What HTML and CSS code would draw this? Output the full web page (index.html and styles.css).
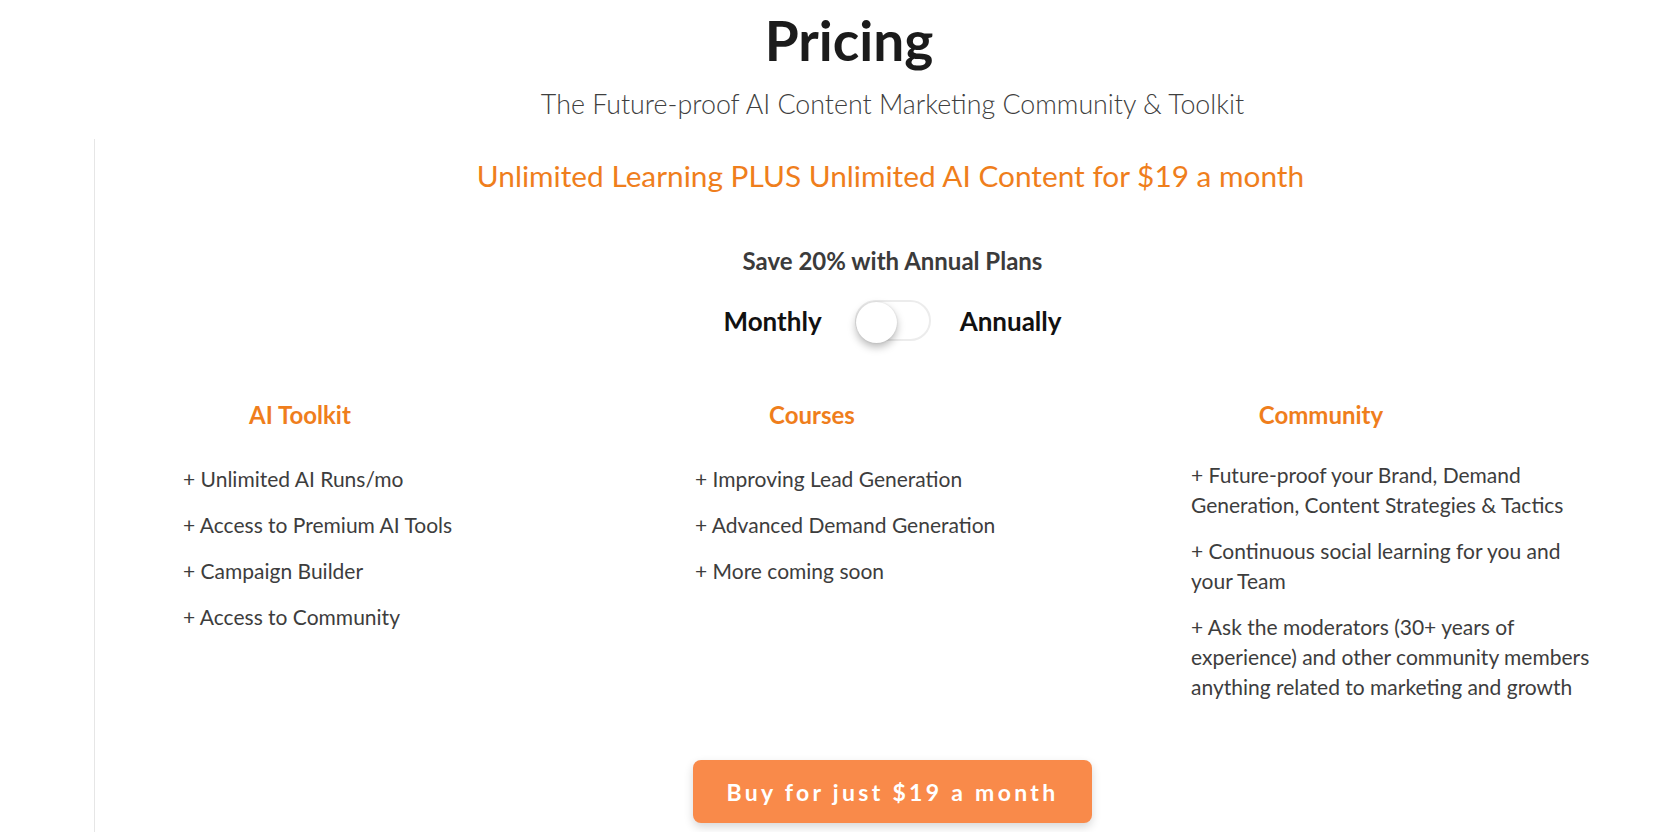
FILE: index.html
```html
<!DOCTYPE html>
<html lang="en">
<head>
<meta charset="utf-8">
<title>Pricing</title>
<link rel="stylesheet" href="styles.css">
</head>
<body>
<header class="page-head">
  <h1 class="page-title">Pricing</h1>
  <p class="page-subtitle">The Future-proof AI Content Marketing Community &amp; Toolkit</p>
</header>
<main class="pricing">
  <h2 class="offer">Unlimited Learning PLUS Unlimited AI Content for $19 a month</h2>
  <p class="save">Save 20% with Annual Plans</p>
  <div class="billing">
    <span class="billing-label billing-monthly">Monthly</span>
    <span class="switch"><span class="switch-knob"></span></span>
    <span class="billing-label billing-annual">Annually</span>
  </div>
  <section class="features">
    <div class="feature-col">
      <h3 class="feature-title">AI Toolkit</h3>
      <ul class="feature-list">
        <li>+ Unlimited AI Runs/mo</li>
        <li>+ Access to Premium AI Tools</li>
        <li>+ Campaign Builder</li>
        <li>+ Access to Community</li>
      </ul>
    </div>
    <div class="feature-col">
      <h3 class="feature-title">Courses</h3>
      <ul class="feature-list">
        <li>+ Improving Lead Generation</li>
        <li>+ Advanced Demand Generation</li>
        <li>+ More coming soon</li>
      </ul>
    </div>
    <div class="feature-col feature-col-wide">
      <h3 class="feature-title">Community</h3>
      <ul class="feature-list">
        <li>+ Future-proof your Brand, Demand Generation, Content Strategies &amp; Tactics</li>
        <li>+ Continuous social learning for you and your Team</li>
        <li>+ Ask the moderators (30+ years of experience) and other community members anything related to marketing and growth</li>
      </ul>
    </div>
  </section>
  <div class="cta-row">
    <a class="cta" href="#">Buy for just $19 a month</a>
  </div>
</main>
</body>
</html>
```

FILE: styles.css
```css
* { box-sizing: border-box; }

html, body {
  margin: 0;
  padding: 0;
  background: #ffffff;
  font-family: Lato, "Open Sans", "Liberation Sans", sans-serif;
  overflow: hidden;
}

.page-head {
  margin: 0;
  padding-top: 10px;
}

.page-title {
  margin: 0;
  padding-left: 26px;
  text-align: center;
  font-size: 55px;
  line-height: 60px;
  font-weight: 700;
  color: #1b1b1b;
}

.page-subtitle {
  margin: 18px 0 0 0;
  padding-left: 113px;
  text-align: center;
  font-size: 26.8px;
  line-height: 32px;
  font-weight: 300;
  color: #3f3f3f;
}

.pricing {
  margin: 19px 0 0 94px;
  padding: 0 0 40px 18px;
  border-left: 1px solid #e6e6e6;
  min-height: 720px;
}

.offer {
  margin: 0;
  padding-top: 19px;
  padding-right: 4px;
  text-align: center;
  font-size: 29.8px;
  line-height: 36px;
  font-weight: 400;
  color: #ef7e1c;
}

.save {
  margin: 53px 0 0 0;
  text-align: center;
  font-size: 24px;
  line-height: 28px;
  font-weight: 700;
  color: #3b3b3b;
}

.billing {
  margin-top: 25px;
  display: flex;
  justify-content: center;
  align-items: center;
  height: 41px;
}

.billing-label {
  font-size: 26px;
  line-height: 40px;
  font-weight: 700;
  color: #111111;
}

.billing-monthly { margin-right: 33px; }
.billing-annual { margin-left: 29px; }

.switch {
  position: relative;
  display: block;
  width: 76px;
  height: 41px;
  border: 2px solid #ececec;
  border-radius: 21px;
  background: #ffffff;
}

.switch-knob {
  position: absolute;
  left: -1px;
  top: 0px;
  width: 41px;
  height: 41px;
  border-radius: 50%;
  background: #ffffff;
  box-shadow: 0 4px 8px rgba(0, 0, 0, 0.28), 0 0 2px rgba(0, 0, 0, 0.12);
}

.features {
  margin-top: 60px;
  padding-left: 70px;
  display: grid;
  grid-template-columns: 512px 496px 405px;
  align-items: start;
}

.feature-title {
  margin: 0;
  width: 234px;
  text-align: center;
  font-size: 24px;
  line-height: 28px;
  font-weight: 700;
  color: #ef7e1c;
}

.feature-col-wide .feature-title { width: 260px; }

.feature-list {
  list-style: none;
  margin: 35px 0 0 0;
  padding: 0;
}

.feature-col-wide .feature-list { margin-top: 31px; }

.feature-list li {
  margin: 0 0 16px 0;
  font-size: 21px;
  line-height: 30px;
  font-weight: 400;
  color: #3d3d3d;
}

.feature-list li:last-child { margin-bottom: 0; }

.cta-row {
  margin-top: 58px;
  display: flex;
  justify-content: center;
}

.cta {
  display: flex;
  align-items: center;
  justify-content: center;
  width: 399px;
  height: 63px;
  border-radius: 8px;
  background: #f98a4a;
  color: #ffffff;
  font-size: 23px;
  font-weight: 700;
  letter-spacing: 3.3px;
  text-decoration: none;
  box-shadow: 0 4px 10px rgba(0, 0, 0, 0.16);
}
```
